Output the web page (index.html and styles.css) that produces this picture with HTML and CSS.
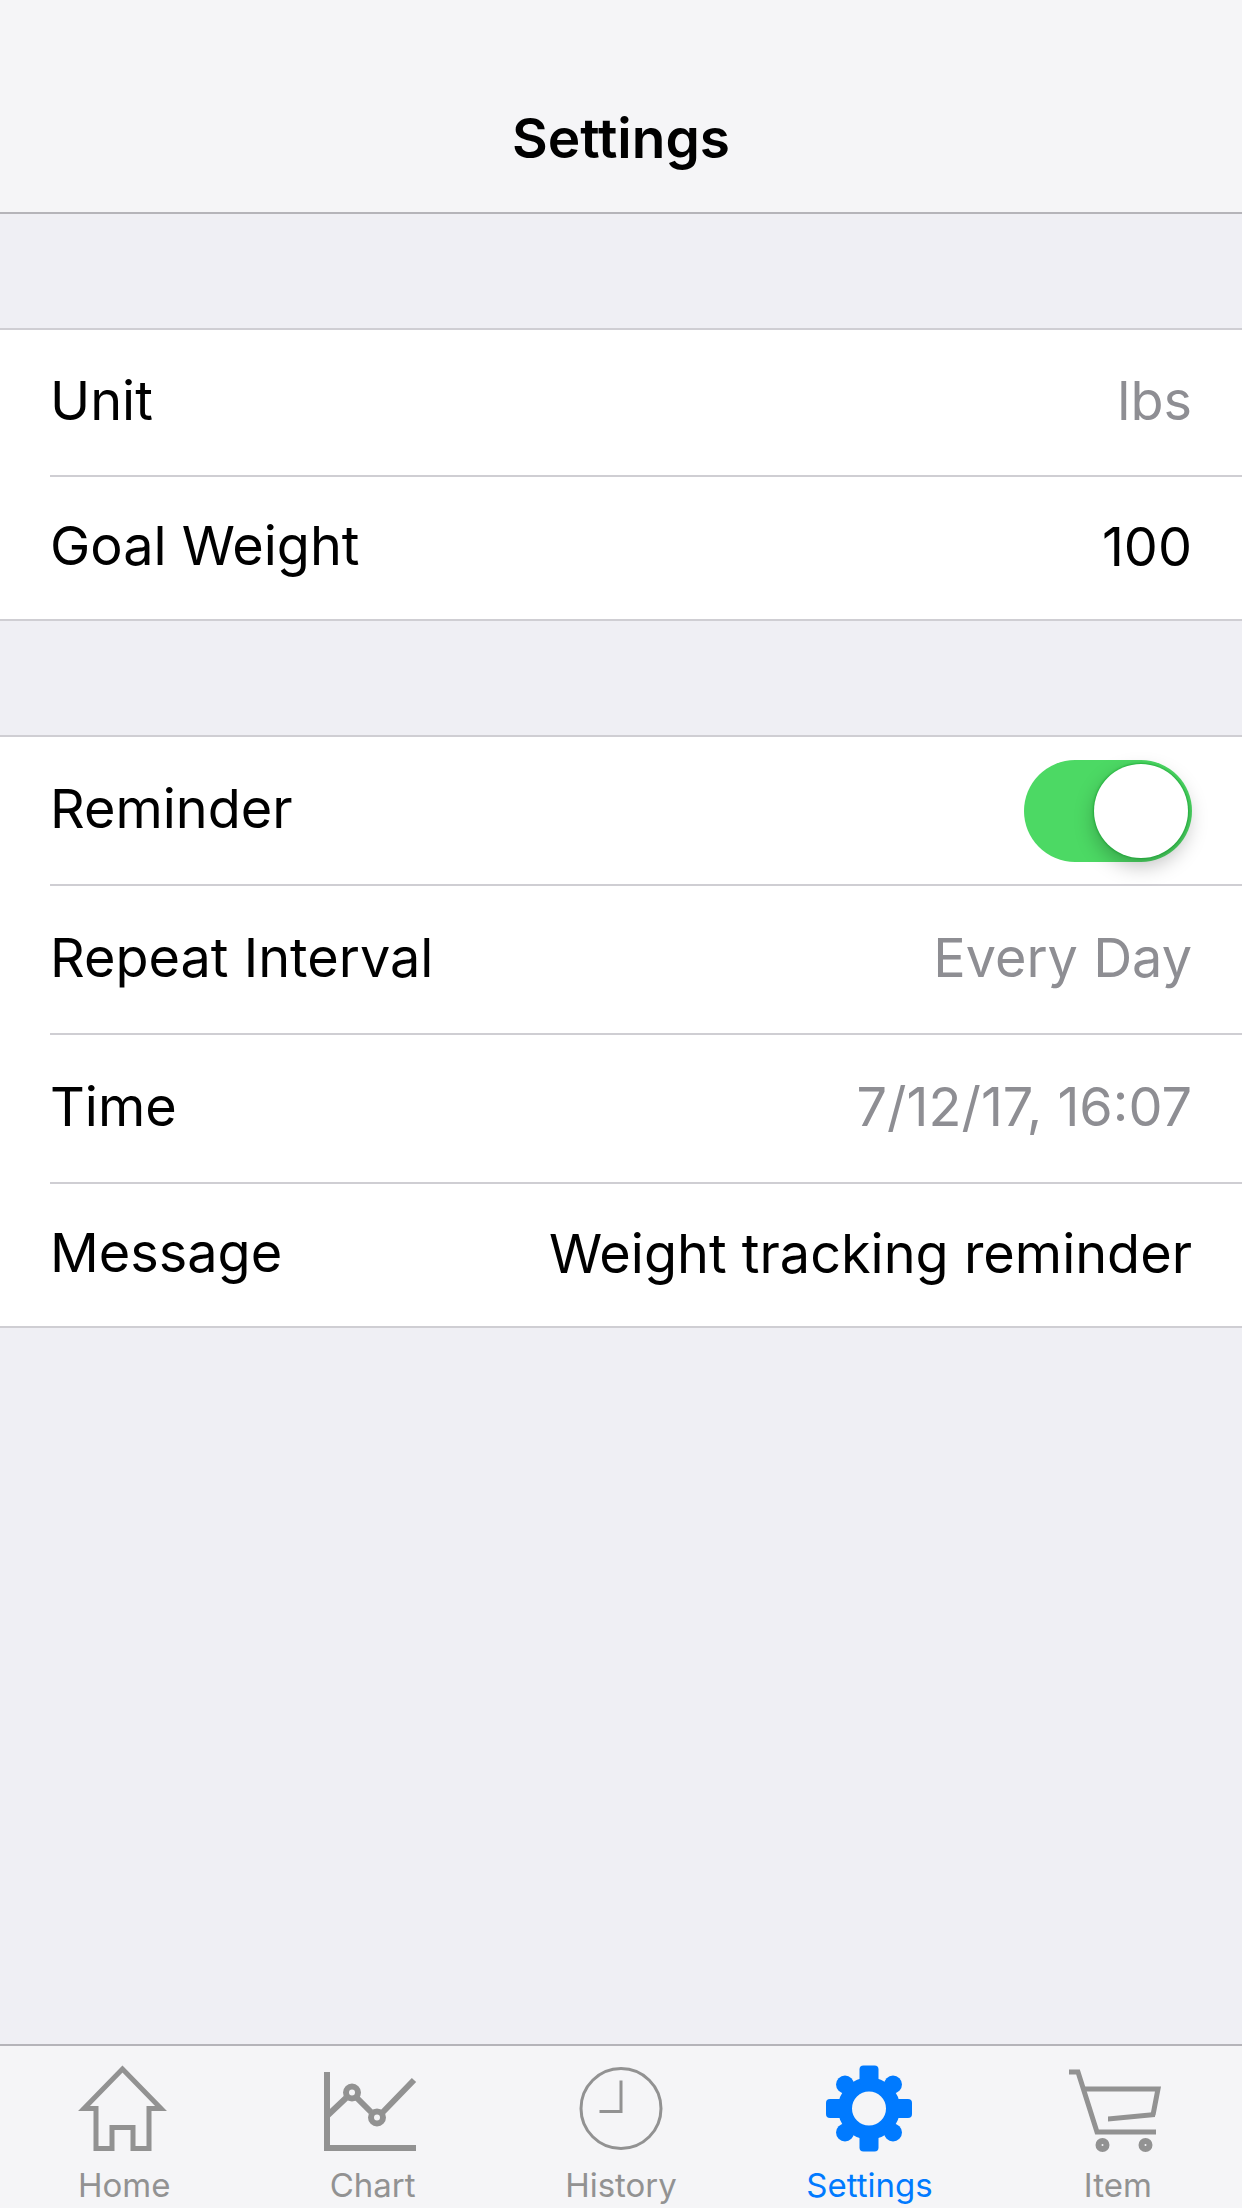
FILE: index.html
```html
<!DOCTYPE html>
<html lang="en">
<head>
<meta charset="utf-8">
<meta name="viewport" content="width=device-width, initial-scale=1">
<title>Settings</title>
<link rel="stylesheet" href="styles.css">
</head>
<body>
<header class="navbar">
  <h1 class="navbar-title">Settings</h1>
</header>

<main class="content">
  <section class="group">
    <div class="row">
      <label class="label" for="unit">Unit</label>
      <select class="value muted" id="unit">
        <option selected>lbs</option>
        <option>kg</option>
      </select>
    </div>
    <div class="row">
      <label class="label" for="goal">Goal Weight</label>
      <input class="value" id="goal" type="text" inputmode="decimal" value="100">
    </div>
  </section>

  <section class="group group-tall">
    <div class="row">
      <label class="label" for="reminder">Reminder</label>
      <input class="switch" id="reminder" type="checkbox" role="switch" checked>
    </div>
    <div class="row">
      <label class="label" for="interval">Repeat Interval</label>
      <select class="value muted" id="interval">
        <option selected>Every Day</option>
        <option>Every Week</option>
      </select>
    </div>
    <div class="row">
      <label class="label" for="time">Time</label>
      <input class="value muted" id="time" type="text" value="7/12/17, 16:07">
    </div>
    <div class="row">
      <label class="label" for="message">Message</label>
      <input class="value" id="message" type="text" value="Weight tracking reminder">
    </div>
  </section>
</main>

<nav class="tabbar">
  <a class="tab" href="#home">
    <svg class="icon" viewBox="2 0 92 88" fill="none" stroke="currentColor" stroke-width="5" aria-hidden="true">
      <path d="M46.500 4 8 43.500H20V83.500H36V62.500H57V83.500H73V43.500H85Z"/>
    </svg>
    <span>Home</span>
  </a>
  <a class="tab" href="#chart">
    <svg class="icon" viewBox="3 0 92 88" fill="none" stroke="currentColor" stroke-width="6" aria-hidden="true">
      <path d="M3 7V83H92M4 50 22 33M33 33 47 47M58 48 90 15"/>
      <circle cx="28" cy="27.500" r="6" />
      <circle cx="53" cy="52.500" r="6" />
    </svg>
    <span>Chart</span>
  </a>
  <a class="tab" href="#history">
    <svg class="icon" viewBox="0 0 92 88" fill="none" stroke="currentColor" stroke-width="3" aria-hidden="true">
      <circle cx="46" cy="43.500" r="40"/>
      <path d="M46 15.500V46.500H24.500M46 45V48"/>
    </svg>
    <span>History</span>
  </a>
  <a class="tab tab-active" href="#settings" aria-current="page">
    <svg class="icon" viewBox="0 0 92 88" fill="currentColor" aria-hidden="true">
      <circle cx="46" cy="43.500" r="24" fill="none" stroke="currentColor" stroke-width="14"/>
      <rect x="36.500" y="0.500" width="19" height="20" rx="4"/>
      <rect x="36.500" y="66.500" width="19" height="20" rx="4"/>
      <rect x="3" y="34" width="20" height="19" rx="4"/>
      <rect x="69" y="34" width="20" height="19" rx="4"/>
      <circle cx="22" cy="19.500" r="9"/>
      <circle cx="70" cy="19.500" r="9"/>
      <circle cx="22" cy="67.500" r="9"/>
      <circle cx="70" cy="67.500" r="9"/>
    </svg>
    <span>Settings</span>
  </a>
  <a class="tab" href="#item">
    <svg class="icon" viewBox="3 0 92 88" fill="none" stroke="currentColor" stroke-width="5" aria-hidden="true">
      <path d="M0 7H9L28 67H87"/>
      <path d="M15 24H89L84 50"/>
      <path d="M39 51.500 86 47V52L39 56.500Z" fill="currentColor" stroke="none"/>
      <circle cx="33.500" cy="80" r="4" stroke-width="6"/>
      <circle cx="76.500" cy="80" r="4" stroke-width="6"/>
    </svg>
    <span>Item</span>
  </a>
</nav>
</body>
</html>
```
FILE: styles.css
```css
:root {
  --bar: #f5f5f7;
  --backdrop: #efeff4;
  --line: #cfced3;
  --bar-line: #b5b4b9;
  --muted: #8e8e93;
  --inset: 50px;
}

* {
  box-sizing: border-box;
}

body {
  margin: 0;
  min-height: 100vh;
  display: flex;
  flex-direction: column;
  background: var(--backdrop);
  color: #000;
  font-family: Inter, "Liberation Sans", sans-serif;
  font-size: 54px;
  line-height: 72px;
}

.navbar {
  padding: 102px var(--inset) 38px;
  background: var(--bar);
  border-bottom: 2px solid var(--bar-line);
  text-align: center;
}

.navbar-title {
  margin: 0;
  font-size: 55px;
  font-weight: 600;
}

.content {
  flex: 1;
}

.group {
  --row-height: 147px;
  margin-top: 114px;
  padding-left: var(--inset);
  background: #fff;
  border: solid var(--line);
  border-width: 2px 0;
}

.group-tall {
  --row-height: 149px;
}

.row {
  display: flex;
  align-items: center;
  gap: 32px;
  min-height: var(--row-height);
  padding-right: var(--inset);
  border-bottom: 2px solid var(--line);
}

.row:last-child {
  min-height: 142px;
  border-bottom: 0;
}

.label {
  flex: none;
  padding-bottom: 4px;
}

.value {
  flex: 1;
  min-width: 0;
  height: 76px;
  margin: 0;
  padding: 0 0 4px;
  border: 0;
  background: none;
  color: inherit;
  font: inherit;
  text-align: right;
  text-align-last: right;
  appearance: none;
}

.muted {
  color: var(--muted);
}

.switch {
  flex: none;
  display: flex;
  justify-content: flex-start;
  width: 168px;
  height: 102px;
  margin: 0 0 0 auto;
  padding: 4px;
  border-radius: 51px;
  background: #e5e5ea;
  appearance: none;
}

.switch::before {
  content: "";
  width: 94px;
  height: 94px;
  border-radius: 50%;
  background: #fff;
  box-shadow: 0 0 2px 1px rgba(0, 150, 30, 0.5), 0 8px 20px rgba(0, 0, 0, 0.25);
}

.switch:checked {
  background: #4cd964;
  justify-content: flex-end;
}

.tabbar {
  display: flex;
  background: var(--bar);
  border-top: 2px solid var(--bar-line);
}

.tab {
  flex: 1;
  display: flex;
  flex-direction: column;
  align-items: center;
  gap: 12px;
  padding: 19px 0 3px;
  color: #929292;
  font-size: 33px;
  line-height: 40px;
  text-decoration: none;
}

.tab-active {
  color: #007aff;
}

.icon {
  width: 92px;
  height: 88px;
  overflow: visible;
}
```
